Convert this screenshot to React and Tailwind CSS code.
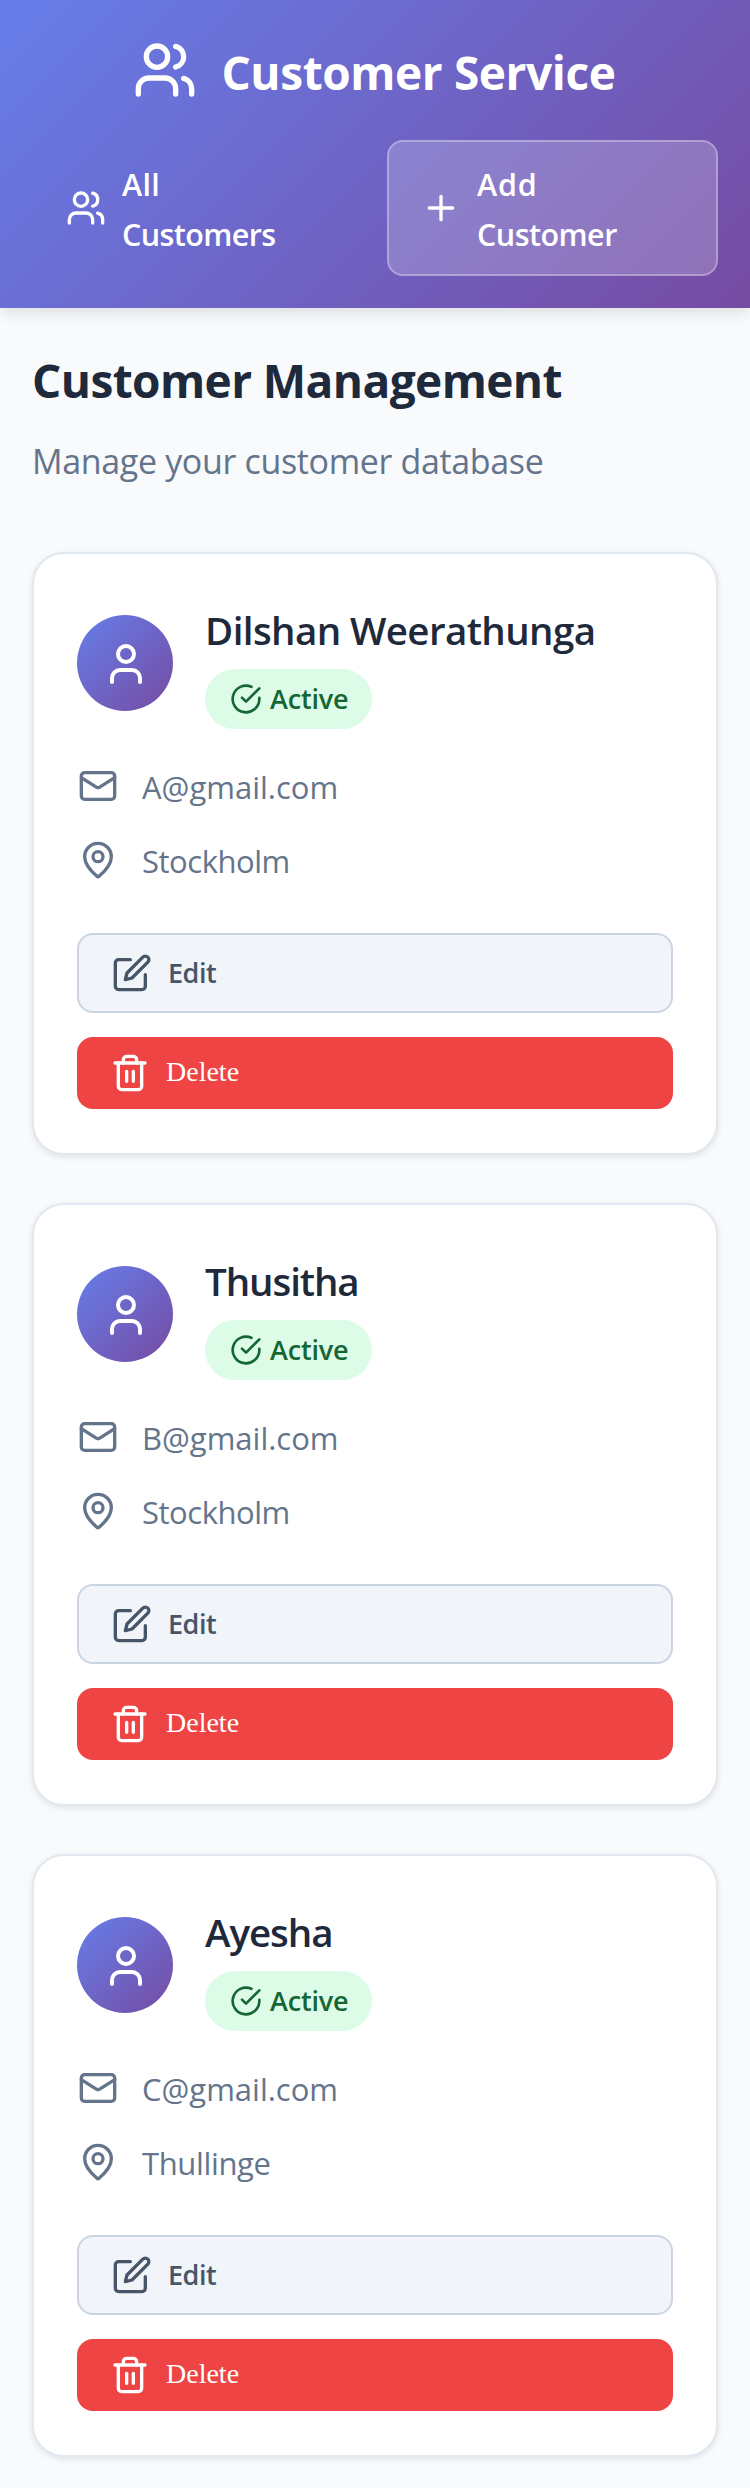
const customers = [
  { name: "Dilshan Weerathunga", email: "A@gmail.com", city: "Stockholm", nameTracking: "tracking-[-0.59px]", cityTracking: "tracking-[-0.47px]" },
  { name: "Thusitha", email: "B@gmail.com", city: "Stockholm", nameTracking: "tracking-[-1.07px]", cityTracking: "tracking-[-0.47px]" },
  { name: "Ayesha", email: "C@gmail.com", city: "Thullinge", nameTracking: "tracking-[-1.04px]", cityTracking: "tracking-[-0.36px]" },
];

function Icon({ className, children }) {
  return (
    <svg
      viewBox="0 0 24 24"
      fill="none"
      stroke="currentColor"
      strokeWidth="2"
      strokeLinecap="round"
      strokeLinejoin="round"
      className={`shrink-0 ${className}`}
    >
      {children}
    </svg>
  );
}

function UsersIcon({ className }) {
  return (
    <Icon className={className}>
      <path d="M16 21v-2a4 4 0 0 0-4-4H6a4 4 0 0 0-4 4v2" />
      <circle cx="9" cy="7" r="4" />
      <path d="M22 21v-2a4 4 0 0 0-3-3.87" />
      <path d="M16 3.13a4 4 0 0 1 0 7.75" />
    </Icon>
  );
}

function CustomerCard({ customer }) {
  return (
    <article className="flex h-[603px] flex-col rounded-[32px] border-2 border-[#e2e8f0] bg-white px-[43px] pt-[43px] shadow-[0_2px_6px_rgba(0,0,0,0.1)]">
      <div className="flex items-center gap-8">
        <div className="flex size-24 shrink-0 items-center justify-center rounded-full bg-[linear-gradient(135deg,#667eea_0%,#764ba2_100%)] pt-0.5 pl-0.5 text-white">
          <Icon className="size-12">
            <path d="M19 21v-2a4 4 0 0 0-4-4H9a4 4 0 0 0-4 4v2" />
            <circle cx="12" cy="7" r="4" />
          </Icon>
        </div>
        <div className="flex flex-col items-start">
          <h3 className={`text-[38.5px] leading-[66px] font-semibold whitespace-nowrap text-[#1e293b] ${customer.nameTracking}`}>
            {customer.name}
          </h3>
          <span className="mt-1.5 flex h-[60px] w-[167px] items-center gap-2 rounded-full bg-[#dcfce7] pl-[25px] text-[#166534]">
            <Icon className="size-8">
              <path d="M22 11.08V12a10 10 0 1 1-5.93-9.14" />
              <path d="m9 11 3 3L22 4" />
            </Icon>
            <span className="pb-0.5 text-[27px] leading-none font-semibold tracking-[-0.18px]">Active</span>
          </span>
        </div>
      </div>

      <div className="mt-8 flex flex-col gap-6 pl-px text-[31px] leading-[48px] text-[#64748b]">
        <div className="flex h-[50px] items-center gap-6">
          <Icon className="size-10">
            <rect width="20" height="16" x="2" y="4" rx="2" />
            <path d="m22 7-8.97 5.7a1.94 1.94 0 0 1-2.06 0L2 7" />
          </Icon>
          <span className="pt-px">{customer.email}</span>
        </div>
        <div className="flex h-[50px] items-center gap-6">
          <Icon className="size-10">
            <path d="M20 10c0 4.993-5.539 10.193-7.399 11.799a1 1 0 0 1-1.202 0C9.539 20.193 4 14.993 4 10a8 8 0 0 1 16 0" />
            <circle cx="12" cy="10" r="3" />
          </Icon>
          <span className={`pt-px ${customer.cityTracking}`}>{customer.city}</span>
        </div>
      </div>

      <div className="mt-12 flex flex-col gap-6">
        <button className="flex h-20 items-center gap-4 rounded-2xl border-2 border-[#cbd5e1] bg-[#f1f5f9] px-[33px] text-[27px] leading-none font-semibold tracking-[-0.47px] text-[#475569]">
          <Icon className="size-10">
            <path d="M11 4H4a2 2 0 0 0-2 2v14a2 2 0 0 0 2 2h14a2 2 0 0 0 2-2v-7" />
            <path d="M18.5 2.5a2.12 2.12 0 0 1 3 3L12 15l-4 1 1-4Z" />
          </Icon>
          <span className="pb-0.5">Edit</span>
        </button>
        <button className="flex h-[72px] items-center gap-4 rounded-2xl bg-[#ef4444] px-[33px] text-[28px] leading-none text-white">
          <Icon className="size-10">
            <path d="M3 6h18" />
            <path d="M19 6v14a2 2 0 0 1-2 2H7a2 2 0 0 1-2-2V6" />
            <path d="M8 6V4a2 2 0 0 1 2-2h4a2 2 0 0 1 2 2v2" />
            <path d="M10 11v6M14 11v6" />
          </Icon>
          <span className="pb-[3px] font-['Liberation_Serif',serif]">Delete</span>
        </button>
      </div>
    </article>
  );
}

export default function App() {
  return (
    <div className="min-h-[2488px] bg-[#f8fafc] font-['Open_Sans',sans-serif]">
      <header className="h-[308px] bg-[linear-gradient(135deg,#667eea_0%,#764ba2_100%)] px-8 pt-8 text-white shadow-[0_8px_12px_-2px_rgba(0,0,0,0.1)]">
        <div className="flex h-[76px] items-center justify-center gap-6 pr-px">
          <UsersIcon className="size-16" />
          <span className="pt-[3px] text-[46px] leading-none font-bold tracking-[-0.4px] whitespace-nowrap">Customer Service</span>
        </div>
        <nav className="mt-8 grid grid-cols-2 gap-6 text-[30.5px] leading-[50px] font-semibold">
          <a className="flex h-[136px] items-center gap-4 rounded-2xl border-2 border-transparent px-8">
            <UsersIcon className="size-10" />
            <span className="flex flex-col pt-0.5">
              <span className="tracking-[0.3px]">All</span>
              <span className="tracking-[-0.6px]">Customers</span>
            </span>
          </a>
          <a className="flex h-[136px] items-center gap-4 rounded-2xl border-2 border-white/30 bg-white/20 px-8">
            <Icon className="size-10">
              <path d="M5 12h14M12 5v14" />
            </Icon>
            <span className="flex flex-col pt-0.5">
              <span className="tracking-[0.8px]">Add</span>
              <span className="tracking-[-0.54px]">Customer</span>
            </span>
          </a>
        </nav>
      </header>

      <main className="px-8 pt-12">
        <h1 className="text-[46px] leading-[48px] font-bold tracking-[-0.58px] text-[#1e293b]">Customer Management</h1>
        <p className="mt-[29px] text-[34px] leading-[56px] tracking-[-0.35px] text-[#64748b]">Manage your customer database</p>
        <div className="mt-[63px] flex flex-col gap-12">
          {customers.map((customer) => (
            <CustomerCard key={customer.name} customer={customer} />
          ))}
        </div>
      </main>
    </div>
  );
}
